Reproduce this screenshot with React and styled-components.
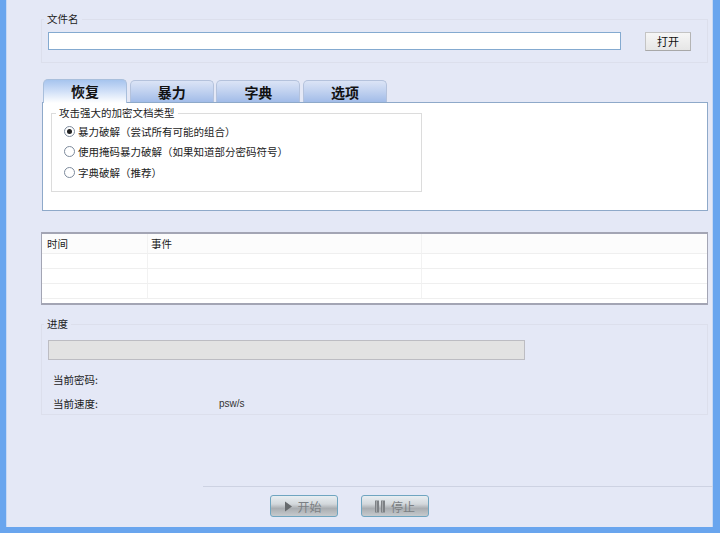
import React from 'react';
import styled, {createGlobalStyle} from 'styled-components';

const FONT = `"Noto Sans CJK SC", "Liberation Sans", sans-serif`;

const GlobalStyle = createGlobalStyle`
  html, body {
    margin: 0;
    padding: 0;
    background: #e4e8f6;
  }
`;

const Frame = styled.div`
  box-sizing: border-box;
  width: 720px;
  height: 533px;
  overflow: hidden;
  display: flex;
  flex-direction: column;
  background: #e4e8f6;
  border-left: 6px solid #69a5ee;
  border-right: 7px solid #69a5ee;
  border-bottom: 6px solid #69a5ee;
  box-shadow: inset 1px 0 0 #c6d8f4, inset -1px 0 0 #c6d8f4;
  padding: 12px 5px 0 35px;
  font-family: ${FONT};
  font-size: 10.5px;
  color: #1c1c1c;
`;

const Group = styled.fieldset`
  box-sizing: border-box;
  margin: 0;
  min-width: 0;
  height: ${props => props.height}px;
  border: 1px solid #dcdfec;
  padding: ${props => props.padding};
`;

const Legend = styled.legend`
  padding: 0 3px;
  margin-left: ${props => props.offset}px;
  line-height: 14px;
  font-size: 10.5px;
  color: #1c1c1c;
`;

const FileRow = styled.div`
  display: flex;
  align-items: flex-start;
`;

const FileInput = styled.div`
  box-sizing: border-box;
  width: 573px;
  height: 18px;
  background: #fff;
  border: 1px solid #84aad0;
`;

const OpenButton = styled.button`
  box-sizing: border-box;
  width: 46px;
  height: 19px;
  margin-left: 24px;
  padding: 0;
  font-family: ${FONT};
  font-size: 11px;
  line-height: 15px;
  color: #111;
  background: linear-gradient(#f6f6f6, #e6e6e6);
  border: 1px solid #c4c4c4;
  border-bottom-color: #a8a8a8;
  border-right-color: #b4b4b4;
`;

const TabBar = styled.div`
  display: flex;
  align-items: flex-end;
  gap: 2.7px;
  height: 23px;
  margin: 16px 0 0 2px;
`;

const Tab = styled.div`
  box-sizing: border-box;
  width: 84px;
  height: ${props => (props.$active ? 24 : 22)}px;
  margin-bottom: ${props => (props.$active ? -1 : 0)}px;
  position: relative;
  border: 1px solid ${props => (props.$active ? '#a9bfdc' : '#b4c2dc')};
  border-bottom: none;
  border-radius: 5px 5px 0 0;
  background: ${props =>
    props.$active
      ? 'linear-gradient(#a6c4ee 0%, #c8daf6 40%, #ffffff 100%)'
      : 'linear-gradient(#dbe4f6 0%, #c3d3f0 45%, #a2bce8 100%)'};
  text-align: center;
  font-size: 14px;
  font-weight: 700;
  line-height: 22px;
  color: #111;
`;

const TabPanel = styled.div`
  box-sizing: border-box;
  width: 666px;
  height: 109px;
  margin-left: 1px;
  padding: 3px 0 0 8px;
  background: #fff;
  border: 1px solid #8ea9c9;
`;

const AttackGroup = styled(Group)`
  width: 371px;
  height: 86px;
  border-color: #dcdcdc;
  padding: 7px 0 0 12px;
`;

const RadioList = styled.div`
  display: flex;
  flex-direction: column;
  gap: 5.5px;
  margin-top: -3.5px;
`;

const RadioRow = styled.div`
  display: flex;
  align-items: center;
  gap: 3px;
  height: 15px;
  color: #1c1c1c;
`;

const RadioMark = styled.span`
  box-sizing: border-box;
  width: 11px;
  height: 11px;
  border-radius: 50%;
  border: 1px solid #7d8a9c;
  background: #fff;
  display: flex;
  align-items: center;
  justify-content: center;
  &::after {
    content: '';
    width: 5px;
    height: 5px;
    border-radius: 50%;
    background: ${props => (props.$checked ? '#222' : 'transparent')};
  }
`;

const LogTable = styled.div`
  box-sizing: border-box;
  width: 667px;
  height: 73px;
  margin-top: 21px;
  background: #fff;
  border: 1px solid #a3a5b4;
  border-top-width: 2px;
  border-bottom-width: 2px;
  display: grid;
  grid-template-columns: 105px 274px 1fr;
  grid-template-rows: 20px 15px 15px 15px;
`;

const Cell = styled.div`
  border-left: 1px solid #f2f2f2;
  border-bottom: 1px solid #efefef;
  background: ${props => (props.$head ? '#fcfcfc' : '#fff')};
  padding-left: 3px;
  line-height: 19px;
  color: #1c1c1c;
  &:nth-child(3n + 1) {
    border-left: none;
    padding-left: 5px;
  }
`;

const ProgressGroup = styled(Group)`
  width: 667px;
  height: 98px;
  margin-top: 12px;
  padding: 9px 0 0 6px;
`;

const ProgressTrack = styled.div`
  box-sizing: border-box;
  width: 477px;
  height: 20px;
  background: #e2e2e2;
  border: 1px solid #bcbcc2;
`;

const StatRow = styled.div`
  display: flex;
  align-items: center;
  height: 15px;
  margin: ${props => props.$gap}px 0 0 5px;
  color: #1c1c1c;
`;

const StatLabel = styled.span`
  width: 166px;
`;

const StatUnit = styled.span`
  font-family: "Liberation Sans", sans-serif;
  font-size: 10px;
  color: #333;
`;

const Footer = styled.div`
  margin: auto -5px 0 162px;
`;

const FooterLine = styled.div`
  height: 1px;
  background: #cdd2e2;
`;

const FooterButtons = styled.div`
  display: flex;
  gap: 23px;
  padding: 8px 0 10px 67px;
`;

const ActionButton = styled.button`
  box-sizing: border-box;
  width: 68px;
  height: 22px;
  display: flex;
  align-items: center;
  justify-content: center;
  gap: ${props => props.$gap}px;
  padding: 0 ${props => props.$trim}px 0 0;
  font-family: ${FONT};
  font-size: 12px;
  color: #7b7f83;
  background: linear-gradient(#e8eef2 0%, #d3d8dc 40%, #a9adb1 62%, #c6cacd 100%);
  border: 1px solid #6fa5c0;
  border-radius: 3px;
`;

const PlayIcon = () => (
  <svg width="9" height="11" viewBox="0 0 9 11">
    <path d="M1 0.5 L8 5.5 L1 10.5 Z" fill="#666a6d" />
  </svg>
);

const StopIcon = () => (
  <svg width="10" height="13" viewBox="0 0 10 13">
    <path d="M0 0.5h4v12h-4z M6 0.5h4v12h-4z" fill="#7d8185" />
    <path d="M1.5 1v11 M7.5 1v11" stroke="#a4a8ab" strokeWidth="1" />
  </svg>
);

const columns = ['时间', '事件', ''];
const rows = [0, 1, 2];

export default function App() {
  return (
    <Frame>
      <GlobalStyle />
      <Group height={51} padding="6px 0 0 6px">
        <Legend offset={-4}>文件名</Legend>
        <FileRow>
          <FileInput />
          <OpenButton>打开</OpenButton>
        </FileRow>
      </Group>

      <TabBar>
        <Tab $active>恢复</Tab>
        <Tab>暴力</Tab>
        <Tab>字典</Tab>
        <Tab>选项</Tab>
      </TabBar>
      <TabPanel>
        <AttackGroup>
          <Legend offset={-8}>攻击强大的加密文档类型</Legend>
          <RadioList>
            <RadioRow><RadioMark $checked />暴力破解（尝试所有可能的组合）</RadioRow>
            <RadioRow><RadioMark />使用掩码暴力破解（如果知道部分密码符号）</RadioRow>
            <RadioRow><RadioMark />字典破解（推荐）</RadioRow>
          </RadioList>
        </AttackGroup>
      </TabPanel>

      <LogTable>
        {columns.map(title => (
          <Cell key={title || 'blank'} $head>{title}</Cell>
        ))}
        {rows.map(row =>
          columns.map(title => <Cell key={`${row}-${title}`} />)
        )}
      </LogTable>

      <ProgressGroup>
        <Legend offset={-4}>进度</Legend>
        <ProgressTrack />
        <StatRow $gap={12}><StatLabel>当前密码:</StatLabel></StatRow>
        <StatRow $gap={9}>
          <StatLabel>当前速度:</StatLabel>
          <StatUnit>psw/s</StatUnit>
        </StatRow>
      </ProgressGroup>

      <Footer>
        <FooterLine />
        <FooterButtons>
          <ActionButton $gap={4} $trim={2}><PlayIcon />开始</ActionButton>
          <ActionButton $gap={6} $trim={0}><StopIcon />停止</ActionButton>
        </FooterButtons>
      </Footer>
    </Frame>
  );
}
